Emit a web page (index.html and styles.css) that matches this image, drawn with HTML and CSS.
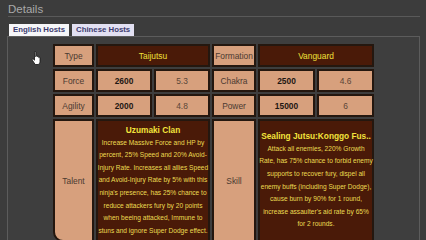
FILE: index.html
```html
<!DOCTYPE html>
<html>
<head>
<meta charset="utf-8">
<link rel="stylesheet" href="styles.css">
</head>
<body>
<div class="header">Details</div>
<div class="tabs">
  <div class="tab active">English Hosts</div>
  <div class="tab">Chinese Hosts</div>
</div>
<div class="panel">
  <div class="grid">
    <div class="cell label">Type</div>
    <div class="cell dark span2">Taijutsu</div>
    <div class="cell label">Formation</div>
    <div class="cell dark span2">Vanguard</div>

    <div class="cell label">Force</div>
    <div class="cell val">2600</div>
    <div class="cell num">5.3</div>
    <div class="cell label">Chakra</div>
    <div class="cell val">2500</div>
    <div class="cell num">4.6</div>

    <div class="cell label">Agility</div>
    <div class="cell val">2000</div>
    <div class="cell num">4.8</div>
    <div class="cell label">Power</div>
    <div class="cell val">15000</div>
    <div class="cell num">6</div>

    <div class="cell label talent">Talent</div>
    <div class="cell dark span2 desc">
      <div class="title">Uzumaki Clan</div>
      <div class="text">Increase Massive Force and HP by<br>percent, 25% Speed and 20% Avoid-<br>Injury Rate. Increases all allies Speed<br>and Avoid-Injury Rate by 5% with this<br>ninja's presence, has 25% chance to<br>reduce attackers fury by 20 points<br>when beeing attacked, Immune to<br>stuns and ignore Super Dodge effect.</div>
    </div>
    <div class="cell label">Skill</div>
    <div class="cell dark span2 desc">
      <div class="title">Sealing Jutsu:Konggo Fus..</div>
      <div class="text">Attack all enemies, 220% Growth<br>Rate, has 75% chance to forbid enemy<br>supports to recover fury, dispel all<br>enemy buffs (including Super Dodge),<br>cause burn by 90% for 1 round,<br>increase assaulter's aid rate by 65%<br>for 2 rounds.</div>
    </div>
  </div>
  <svg class="cursor" width="11" height="14" viewBox="0 0 11 14">
    <path d="M3.5 1.2c0-.7 1.3-.7 1.3 0v4.6l.3-1c.3-.6 1.3-.5 1.3.2v.8c.2-.7 1.3-.6 1.3.1v.7c.3-.6 1.3-.4 1.3.3v3.5c0 1.4-.8 2.6-1.6 3.1H4.2L1.4 9.2c-.5-.7.3-1.5 1-1l1.1 1V1.2z" fill="#fff" stroke="#111" stroke-width="0.8" stroke-linejoin="round"/>
  </svg>
</div>
</body>
</html>
```
FILE: styles.css
```css
html, body {
  margin: 0;
  padding: 0;
  background: #3c3c3c;
  font-family: "Liberation Sans", Arial, sans-serif;
  overflow: hidden;
}

.header {
  margin: 2px 6px 0 8px;
  height: 14px;
  line-height: 14px;
  font-size: 11.5px;
  color: #a9a9a9;
  border-bottom: 1px solid #595959;
}

.tabs {
  display: flex;
  gap: 3px;
  margin: 7px 0 0 9px;
  height: 12px;
}

.tab {
  height: 12px;
  line-height: 12px;
  padding: 0 4px;
  font-size: 7.8px;
  font-weight: bold;
  color: #3b3b6e;
  background: #e2e0f2;
}

.tab.active {
  background: #f6f6f8;
}

.panel {
  position: relative;
  margin: 0 6px 0 7px;
  height: 220px;
  border: 1px solid #5c5c5c;
  border-bottom: none;
  padding-top: 7px;
  background: #3e3e3e;
}

.grid {
  display: grid;
  width: 321px;
  margin: 0 auto;
  grid-template-columns: 41px 56px 56px 44px 57px 57px;
  grid-template-rows: 23px 23px 23px auto;
  gap: 2px;
}

.cell {
  box-sizing: border-box;
  border: 2px solid #24170f;
  background: #d7a07d;
  display: flex;
  align-items: center;
  justify-content: center;
  font-size: 8.4px;
  color: #4b3a31;
  text-align: center;
}

.span2 {
  grid-column: span 2;
}

.dark {
  background: #4a1a08;
  color: #f1e13a;
}

.val {
  font-weight: bold;
  color: #1e1713;
}

.num {
  color: #5b4638;
}

.talent {
  border-bottom-left-radius: 10px;
}

.desc {
  flex-direction: column;
  padding: 3px 0 3px;
}

.title {
  font-weight: bold;
  font-size: 8.3px;
  line-height: 12.6px;
  white-space: nowrap;
  color: #f3e43c;
}

.text {
  font-size: 6.6px;
  line-height: 12.6px;
  white-space: nowrap;
  color: #ecdc52;
}

.cursor {
  position: absolute;
  left: 23px;
  top: 14px;
}
```
